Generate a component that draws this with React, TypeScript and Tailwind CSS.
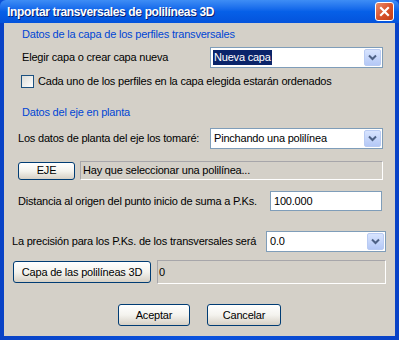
import React from "react";

const font = { fontFamily: '"Liberation Sans", Arial, sans-serif' };

function Chevron() {
  return (
    <svg width="9" height="7" viewBox="0 0 9 7">
      <path d="M1 1.5 L4.5 5 L8 1.5" fill="none" stroke="#4D6185" strokeWidth="2" />
    </svg>
  );
}

function Combo({ w, text, selected }: { w: string; text: string; selected?: boolean }) {
  return (
    <div className={`${w} h-[21px] bg-white border border-[#7F9DB9] flex items-stretch shrink-0`}>
      <div className="flex-1 flex items-center pl-[2px]">
        <span className={selected ? "bg-[#0A246A] text-white px-[1px] leading-[15px]" : "pl-[1px] text-black"}>{text}</span>
      </div>
      <div className="w-[17px] m-[1px] rounded-[2px] border border-[#B9CBF3] bg-gradient-to-b from-[#D8E4FE] to-[#B4C8F6] flex items-center justify-center">
        <Chevron />
      </div>
    </div>
  );
}

function Btn({ w, h, children }: { w: string; h: string; children: React.ReactNode }) {
  return (
    <div className={`${w} ${h} rounded-[3px] border border-[#003C74] bg-gradient-to-b from-white via-[#F4F3EE] to-[#D6D0C5] flex items-center justify-center text-black shrink-0`}>
      {children}
    </div>
  );
}

export default function App() {
  return (
    <div className="w-[399px] h-[340px] bg-[#0A4FD8] flex flex-col text-[11px] tracking-[-0.2px] whitespace-nowrap text-black overflow-hidden" style={font}>
      <div className="h-[23px] shrink-0 bg-gradient-to-b from-[#3E8DF5] via-[#0660E8] to-[#0453DC] flex items-center justify-between pl-[7px] pr-[5px] rounded-t-[6px]">
        <span className="text-white font-bold text-[12px] tracking-[-0.35px]" style={{ textShadow: "1px 1px #0A1E6E" }}>
          Inportar transversales de polilíneas 3D
        </span>
        <div className="w-[19px] h-[19px] rounded-[3px] border border-white bg-gradient-to-br from-[#E88B6C] via-[#D9532C] to-[#C23E16] flex items-center justify-center">
          <svg width="11" height="11" viewBox="0 0 11 11">
            <path d="M2 2 L9 9 M9 2 L2 9" stroke="white" strokeWidth="2.2" strokeLinecap="square" />
          </svg>
        </div>
      </div>
      <div className="flex-1 flex px-[4px] pb-[4px] bg-gradient-to-r from-[#0842C6] via-[#0A52DE] to-[#0842C6]">
        <div className="flex-1 bg-[#D4D0C8] flex flex-col pt-[5px]">
          <div className="pl-[18px] h-[13px] leading-[13px] text-[#0046D5]">Datos de la capa de los perfiles transversales</div>

          <div className="mt-[6px] flex items-center pl-[18px] h-[21px]">
            <span className="w-[188px] shrink-0">Elegir capa o crear capa nueva</span>
            <Combo w="w-[173px]" text="Nueva capa" selected />
          </div>

          <div className="mt-[7px] flex items-center pl-[17px] h-[13px]">
            <div className="w-[13px] h-[13px] border border-[#1C5180] bg-gradient-to-br from-[#DCDCD7] to-white mr-[4px] shrink-0" />
            <span>Cada uno de los perfiles en la capa elegida estarán ordenados</span>
          </div>

          <div className="mt-[18px] pl-[18px] h-[13px] leading-[13px] text-[#0046D5]">Datos del eje en planta</div>

          <div className="mt-[9px] flex items-center pl-[14px] h-[21px]">
            <span className="w-[192px] shrink-0">Los datos de planta del eje los tomaré:</span>
            <Combo w="w-[173px]" text="Pinchando una polilínea" />
          </div>

          <div className="mt-[12px] flex items-center pl-[14px] h-[19px]">
            <Btn w="w-[57px]" h="h-[18px]">EJE</Btn>
            <div className="ml-[5px] w-[303px] h-[19px] border-t border-l border-[#A7A6AA] border-b border-r border-b-white border-r-white flex items-center pl-[2px]">
              Hay que seleccionar una polilínea...
            </div>
          </div>

          <div className="mt-[11px] flex items-center pl-[14px] h-[20px]">
            <span className="w-[252px] shrink-0">Distancia al origen del punto inicio de suma a P.Ks.</span>
            <div className="w-[112px] h-[20px] bg-white border border-[#7F9DB9] flex items-center pl-[3px] shrink-0">100.000</div>
          </div>

          <div className="mt-[20px] flex items-center pl-[8px] h-[21px]">
            <span className="w-[254px] shrink-0">La precisión para los P.Ks. de los transversales será</span>
            <Combo w="w-[120px]" text="0.0" />
          </div>

          <div className="mt-[8px] flex items-center pl-[9px] h-[24px]">
            <Btn w="w-[138px]" h="h-[22px]">Capa de las polilíneas 3D</Btn>
            <div className="ml-[6px] w-[229px] h-[24px] border-t border-l border-[#A7A6AA] border-b border-r border-b-white border-r-white flex items-center pl-[1px]">
              0
            </div>
          </div>

          <div className="mt-[20px] flex items-center pl-[114px] h-[22px]">
            <Btn w="w-[72px]" h="h-[22px]">Aceptar</Btn>
            <div className="w-[17px] shrink-0" />
            <Btn w="w-[74px]" h="h-[22px]">Cancelar</Btn>
          </div>
        </div>
      </div>
    </div>
  );
}
